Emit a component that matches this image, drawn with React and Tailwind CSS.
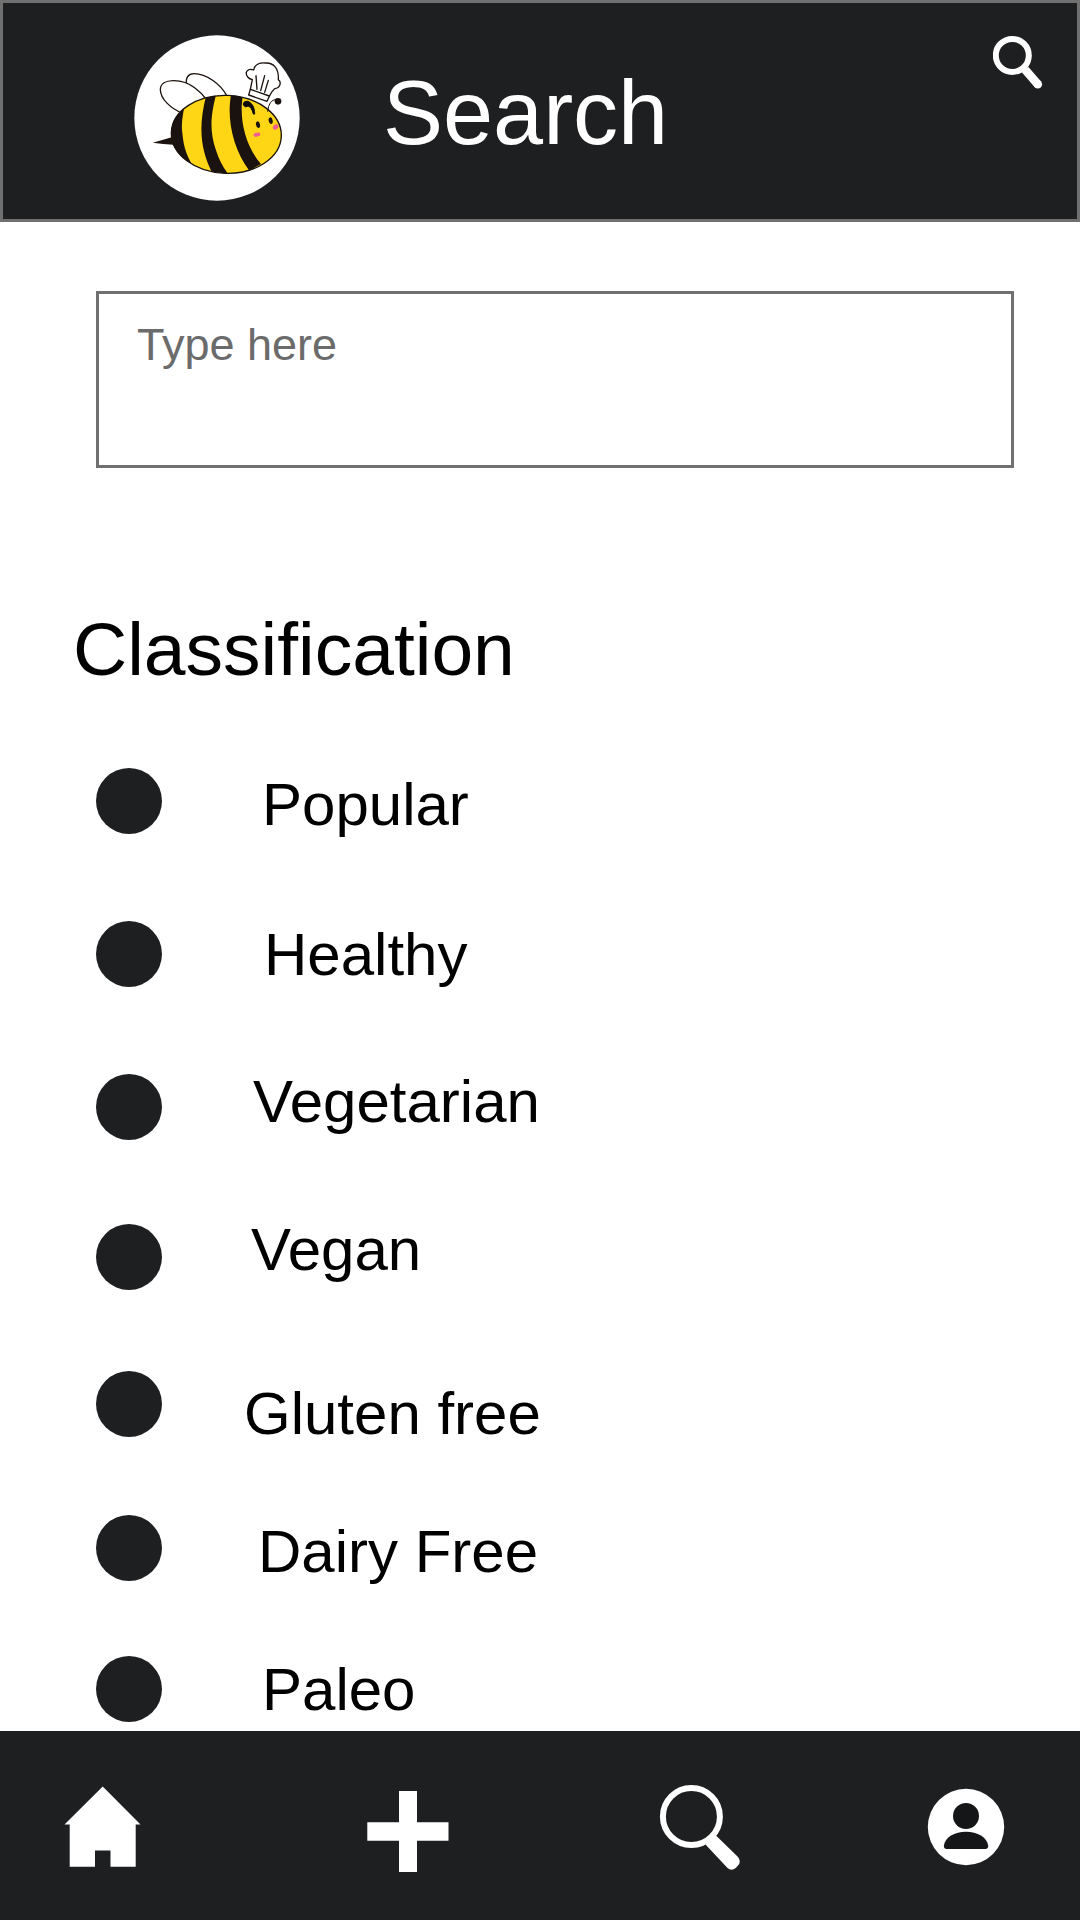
const items = [
  { label: 'Popular', row: 'h-[153px]', text: 'ml-[100px] mt-[3px]' },
  { label: 'Healthy', row: 'h-[153px]', text: 'ml-[102px] mt-0' },
  { label: 'Vegetarian', row: 'h-[150px]', text: 'ml-[91px] -mt-[6px]' },
  { label: 'Vegan', row: 'h-[147px]', text: 'ml-[89px] -mt-[8px]' },
  { label: 'Gluten free', row: 'h-[144px]', text: 'ml-[82px] mt-[9px]' },
  { label: 'Dairy Free', row: 'h-[141px]', text: 'ml-[96px] mt-[3px]' },
  { label: 'Paleo', row: 'h-[66px]', text: 'ml-[100px] mt-0' },
];

function BeeLogo() {
  return (
    <svg className="ml-[131px] mt-[32px] h-[166px] w-[166px] shrink-0" viewBox="42 44 498 498">
      <defs>
        <clipPath id="body"><ellipse cx="319" cy="342" rx="166" ry="117" transform="rotate(2 319 342)" /></clipPath>
      </defs>
      <circle cx="291" cy="293" r="248" fill="#fff" />
      <g fill="#fff" stroke="#1a120e" strokeWidth="4">
        <path d="M320 226C303 193 260 160 222 160C205 160 196 172 200 192L258 240Z" />
        <path d="M188 279C151 264 122 236 121 208C121 171 189 174 225 203Q245 218 258 236Z" />
      </g>
      <path d="M98 367Q130 358 160 349V373Q130 372 98 367Z" fill="#1a120e" />
      <g clipPath="url(#body)">
        <rect x="140" y="210" width="360" height="265" fill="#ffd615" />
        <path d="M140 210H207Q180 295 187 337C191 384 202 411 223 443L230 475H140Z" fill="#1a120e" />
        <path d="M260 220H289C270 292 270 335 287 387Q300 430 325 462H279C243 394 232 322 260 220Z" fill="#1a120e" />
        <path d="M335 215H371C355 282 371 372 423 431L388 451C337 384 318 288 335 215Z" fill="#1a120e" />
      </g>
      <ellipse cx="319" cy="342" rx="165" ry="117" transform="rotate(2 319 342)" fill="none" stroke="#1a120e" strokeWidth="4" />
      <g fill="none" stroke="#1a120e" strokeWidth="4" strokeLinecap="round" strokeLinejoin="round">
        <path fill="#fff" d="M391 207L397 178C386 176 377 166 379 156C382 147 391 145 401 149C404 131 421 126 437 128C460 127 477 143 475 178C485 185 481 204 464 205C456 211 452 219 448 228L441 243L386 224Z" />
        <path d="M391 207L448 227M408 166L411 207M434 166L422 211M445 180L434 216" />
        <path d="M443 273Q446 239 468 237" strokeWidth="3" />
      </g>
      <circle cx="474" cy="243" r="10" fill="#1a120e" />
      <path d="M370 254Q369 241 384 243C397 249 404 261 404 281Q400 284 399 278C396 267 391 259 384 257Q377 264 370 254Z" fill="#0b0a09" stroke="#0b0a09" strokeWidth="3" />
      <ellipse cx="414" cy="313" rx="6" ry="10" transform="rotate(-12 414 313)" fill="#1a120e" />
      <ellipse cx="452" cy="301" rx="6" ry="10" transform="rotate(-12 452 301)" fill="#1a120e" />
      <ellipse cx="411" cy="343" rx="10.5" ry="6" transform="rotate(-12 411 343)" fill="#ee5f93" />
      <ellipse cx="467" cy="320" rx="9" ry="7" transform="rotate(-40 467 320)" fill="#ee5f93" />
    </svg>
  );
}

export default function App() {
  return (
    <div className="flex h-[1920px] w-[1080px] flex-col overflow-hidden bg-white font-['Liberation_Sans',Arial,sans-serif] text-black">
      <header className="flex h-[222px] shrink-0 items-start border-[3px] border-[#707070] bg-[#1e1f21]">
        <BeeLogo />
        <h1 className="ml-[83px] mt-[58px] text-[90px] leading-[104px] text-white">Search</h1>
        <svg className="ml-auto mr-[34px] mt-[32px] h-[54px] w-[50px]" viewBox="0 0 50 54" fill="none" stroke="#fff">
          <circle cx="19.3" cy="20.4" r="16.5" strokeWidth="6" />
          <path d="M32 34.5L44.8 49.2" strokeWidth="8.6" />
          <circle cx="44.8" cy="49.2" r="4.3" fill="#fff" stroke="none" />
        </svg>
      </header>

      <main className="flex grow flex-col overflow-hidden">
        <div className="ml-[96px] mt-[69px] h-[177px] w-[918px] shrink-0 border-[3px] border-[#707070] pl-[38px] pt-[25px] text-[45px] leading-[52px] text-[#6b6b6b]">
          Type here
        </div>
        <h2 className="ml-[73px] mt-[138px] shrink-0 text-[75px] leading-[86px]">Classification</h2>
        <ul className="ml-[96px] mt-[76px]">
          {items.map((item) => (
            <li key={item.label} className={'flex items-start ' + item.row}>
              <span className="size-[66px] shrink-0 rounded-full bg-[#1e1f21]" />
              <span className={'whitespace-nowrap text-[60px] leading-[68px] ' + item.text}>{item.label}</span>
            </li>
          ))}
        </ul>
      </main>

      <nav className="flex h-[189px] shrink-0 items-start bg-[#1e1f21]">
        <svg className="ml-[64px] mt-[55px] h-[82px] w-[78px]" viewBox="0 0 78 82" fill="#fff">
          <path d="M38.7 0.5L76.5 38.5H71.7V80.7H46.5V64.4H31V80.7H5.7V38.5H0.5Z" />
        </svg>
        <svg className="ml-[225px] mt-[60px] h-[82px] w-[82px]" viewBox="0 0 82 82" fill="#fff">
          <path d="M32 0H50V31.3H81.5V49.7H50V81H32V49.7H0.3V31.3H32Z" />
        </svg>
        <svg className="ml-[210px] mt-[53px] h-[88px] w-[82px]" viewBox="0 0 82 88" fill="none" stroke="#fff">
          <circle cx="32.4" cy="32.5" r="28.5" strokeWidth="6" />
          <path d="M52 49.5Q54.5 48 57 51.5L79 73Q82.5 77.5 79 81.5L77 83.8Q72.5 87.5 68.5 84L46.5 60.5Z" fill="#fff" stroke="none" />
        </svg>
        <svg className="ml-[186px] mt-[57px] h-[78px] w-[78px]" viewBox="0 0 78 78">
          <circle cx="39" cy="39" r="38.2" fill="#fff" />
          <circle cx="39" cy="28" r="13" fill="#151618" />
          <path d="M19 61Q16.7 60.5 16.8 58C18 49 27.5 43.7 39 43.7S60 49 61.3 58Q61.3 60.5 59 61Z" fill="#151618" />
        </svg>
      </nav>
    </div>
  );
}
